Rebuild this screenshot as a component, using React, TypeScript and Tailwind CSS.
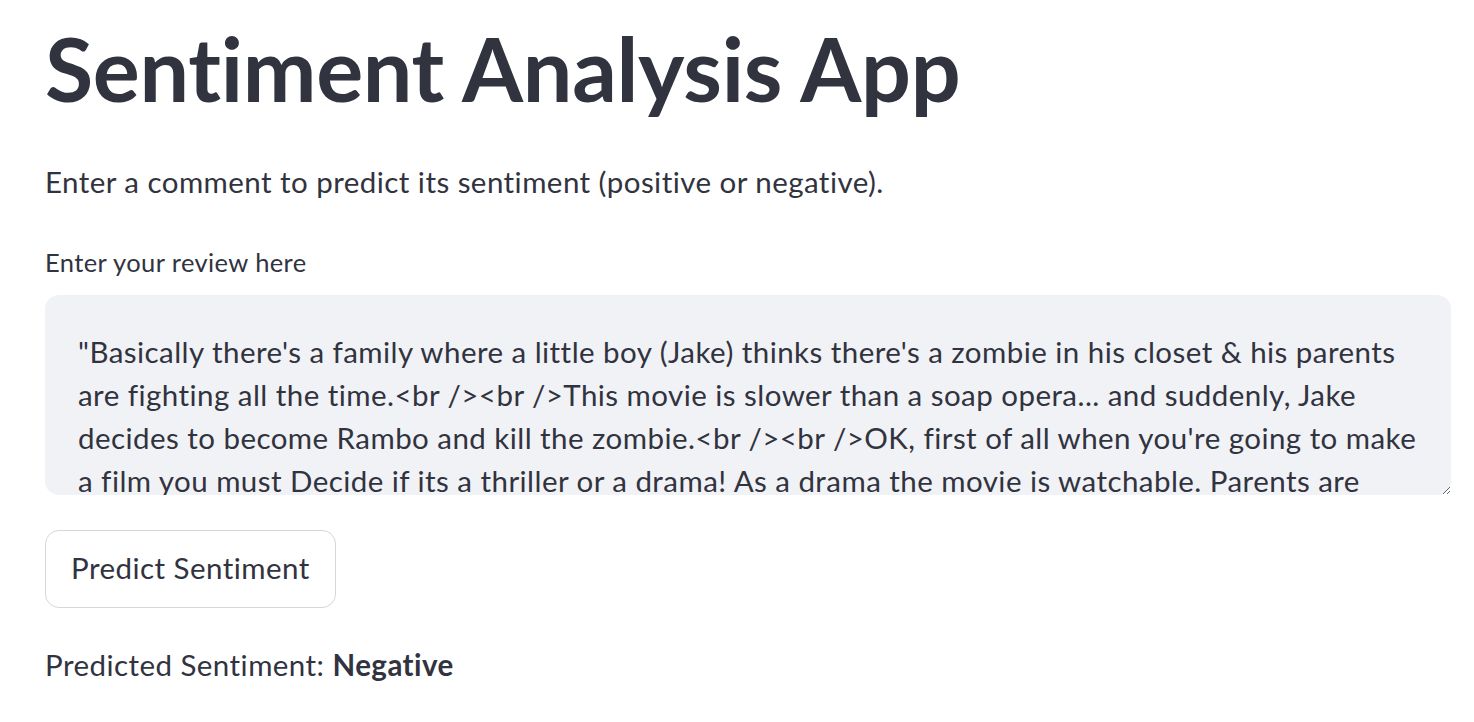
const review =
  "\"Basically there's a family where a little boy (Jake) thinks there's a zombie in his closet & his parents are fighting all the time.<br /><br />This movie is slower than a soap opera... and suddenly, Jake decides to become Rambo and kill the zombie.<br /><br />OK, first of all when you're going to make a film you must Decide if its a thriller or a drama! As a drama the movie is watchable. Parents are divorcing & arguing like in real life. And then we have Jake with his closet which totally ruins all the film! I expected to see a BOOGEYMAN similar movie, and instead i watched a drama with some meaningless thriller spots.<br /><br />3 out of 10 just for the well playing parents & descent dialogs. As for the shots with Jake: just ignore them.\"";

export default function App() {
  return (
    <div className="min-h-[722px] bg-white text-[#31333f] font-['Lato','Liberation_Sans',sans-serif]">
      <div className="pl-[45px] pr-[23px] pt-[16px]">
        <h1 className="text-[88px] font-bold leading-[1.2] tracking-[-0.3px]">Sentiment Analysis App</h1>

        <p className="mt-[36px] text-[29.5px] leading-[1.6] tracking-[0.45px]">
          Enter a comment to predict its sentiment (positive or negative).
        </p>

        <label className="mt-[37px] block text-[25.5px] leading-[1.6] tracking-[0.4px]">Enter your review here</label>

        <div className="mt-[12px]">
          <textarea
            readOnly
            defaultValue={review}
            className="block h-[200px] w-full resize-y overflow-hidden rounded-[14px] bg-[#f0f2f6] px-[33px] pt-[35px] text-[29.5px] leading-[43px] tracking-[0.45px] text-[#31333f] outline-none"
          />
        </div>

        <button className="mt-[35px] block h-[78px] rounded-[14px] border border-[#d6d6d9] bg-white px-[25px] text-[29.5px] tracking-[0.45px] text-[#31333f]">
          Predict Sentiment
        </button>

        <p className="mt-[33px] text-[29.5px] leading-[1.6] tracking-[0.45px]">
          Predicted Sentiment: <span className="font-bold">Negative</span>
        </p>
      </div>
    </div>
  );
}
